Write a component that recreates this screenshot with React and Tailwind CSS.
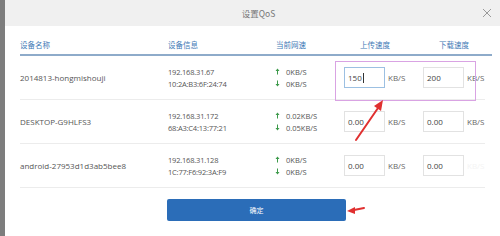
import React from "react";

const LAT = { fontFamily: "'Open Sans', 'Noto Sans CJK SC', sans-serif" };
const CJK = { fontFamily: "'Noto Sans CJK SC', 'Noto Sans', sans-serif" };

function Up() {
  return (
    <svg width="5" height="7" viewBox="0 0 5 7" className="shrink-0">
      <path d="M2.5 0.5 L4.5 3 L3 3 L3 6.5 L2 6.5 L2 3 L0.5 3 Z" fill="#3c9a4a" />
    </svg>
  );
}
function Down() {
  return (
    <svg width="5" height="7" viewBox="0 0 5 7" className="shrink-0">
      <path d="M2.5 6.5 L4.5 4 L3 4 L3 0.5 L2 0.5 L2 4 L0.5 4 Z" fill="#3c9a4a" />
    </svg>
  );
}

function Input({ value, focus, caret }) {
  return (
    <div
      className={
        "w-[41px] h-[21px] flex items-center pl-[3px] text-[8px] text-[#444] bg-white border " +
        (focus ? "border-[#9cc0e2]" : "border-[#e2e2e2]")
      }
      style={LAT}
    >
      <span>{value}</span>
      {caret && <span className="w-px h-[10px] bg-[#333] ml-px" />}
    </div>
  );
}

function Row({ name, ip, mac, up, down, u, d, focus, hideLast }) {
  return (
    <div className="flex items-center h-[44px] border-b border-[#ececec] text-[#555]" style={LAT}>
      <div className="w-[148px] text-[8px]">{name}</div>
      <div className="w-[107px] text-[7.5px] leading-[12px] tracking-[-0.2px]">
        <div>{ip}</div>
        <div>{mac}</div>
      </div>
      <div className="w-[69px] text-[7.5px] leading-[12px]">
        <div className="flex items-center gap-[6px]">
          <Up />
          <span>{up}</span>
        </div>
        <div className="flex items-center gap-[6px]">
          <Down />
          <span>{down}</span>
        </div>
      </div>
      <div className="w-[79px] flex items-center gap-[3px]">
        <Input value={u} focus={focus} caret={focus} />
        <span className="text-[8px] text-[#666]">KB/S</span>
      </div>
      <div className="flex items-center gap-[3px]">
        <Input value={d} />
        <span className={"text-[8px] " + (hideLast ? "text-[#f4f4f4]" : "text-[#666]")}>KB/S</span>
      </div>
    </div>
  );
}

export default function App() {
  return (
    <div className="w-[500px] h-[236px] flex bg-[#7d7d7d] overflow-hidden">
      <div className="w-[5px] shrink-0" />
      <div className="relative flex-1 bg-white flex flex-col">
        <div className="h-[26px] bg-[#f0f0f0] flex items-center justify-center relative">
          <span className="text-[8.5px] text-[#777] ml-[12px]" style={CJK}>
            设置QoS
          </span>
          <svg
            width="10"
            height="10"
            viewBox="0 0 10 10"
            className="absolute right-[8px] top-[8px]"
          >
            <path d="M1 1 L9 9 M9 1 L1 9" stroke="#9a9a9a" strokeWidth="1" />
          </svg>
        </div>

        <div className="pl-[15px] pr-[8px]">
          <div
            className="flex items-end h-[30px] pb-[4px] text-[7.5px] text-[#3f7ab6] border-b-2 border-[#8eabca]"
            style={CJK}
          >
            <div className="w-[148px]">设备名称</div>
            <div className="w-[107px]">设备信息</div>
            <div className="w-[69px] pl-px">当前网速</div>
            <div className="w-[79px] pl-[16px]">上传速度</div>
            <div className="pl-[16px]">下载速度</div>
          </div>

          <div className="pr-[7px]">
            <Row
              name="2014813-hongmishouji"
              ip="192.168.31.67"
              mac="10:2A:B3:6F:24:74"
              up="0KB/S"
              down="0KB/S"
              u="150"
              d="200"
              focus
            />
            <Row
              name="DESKTOP-G9HLFS3"
              ip="192.168.31.172"
              mac="68:A3:C4:13:77:21"
              up="0.02KB/S"
              down="0.05KB/S"
              u="0.00"
              d="0.00"
            />
            <Row
              name="android-27953d1d3ab5bee8"
              ip="192.168.31.128"
              mac="1C:77:F6:92:3A:F9"
              up="0KB/S"
              down="0KB/S"
              u="0.00"
              d="0.00"
              hideLast
            />
          </div>
        </div>

        <div className="flex justify-start pl-[162px] pt-[11px]">
          <button
            className="w-[179px] h-[22px] rounded-[2px] bg-[#2b6db8] text-white text-[7px] flex items-center justify-center"
            style={CJK}
          >
            确定
          </button>
        </div>

        <div className="absolute left-[330px] top-[61px] w-[141px] h-[40px] border border-[#d9a3e3] pointer-events-none" />

        <svg
          className="absolute left-0 top-0 pointer-events-none"
          width="495"
          height="236"
          viewBox="5 0 495 236"
        >
          <path d="M356 140 L378 108" stroke="#e03030" strokeWidth="2" strokeLinecap="round" />
          <path d="M383 100 L374 106 L381 111 Z" fill="#e03030" />
          <path d="M364 208 L354 210" stroke="#e03030" strokeWidth="2" strokeLinecap="round" />
          <path d="M347 211 L355 207 L355 214 Z" fill="#e03030" />
        </svg>
      </div>
    </div>
  );
}
